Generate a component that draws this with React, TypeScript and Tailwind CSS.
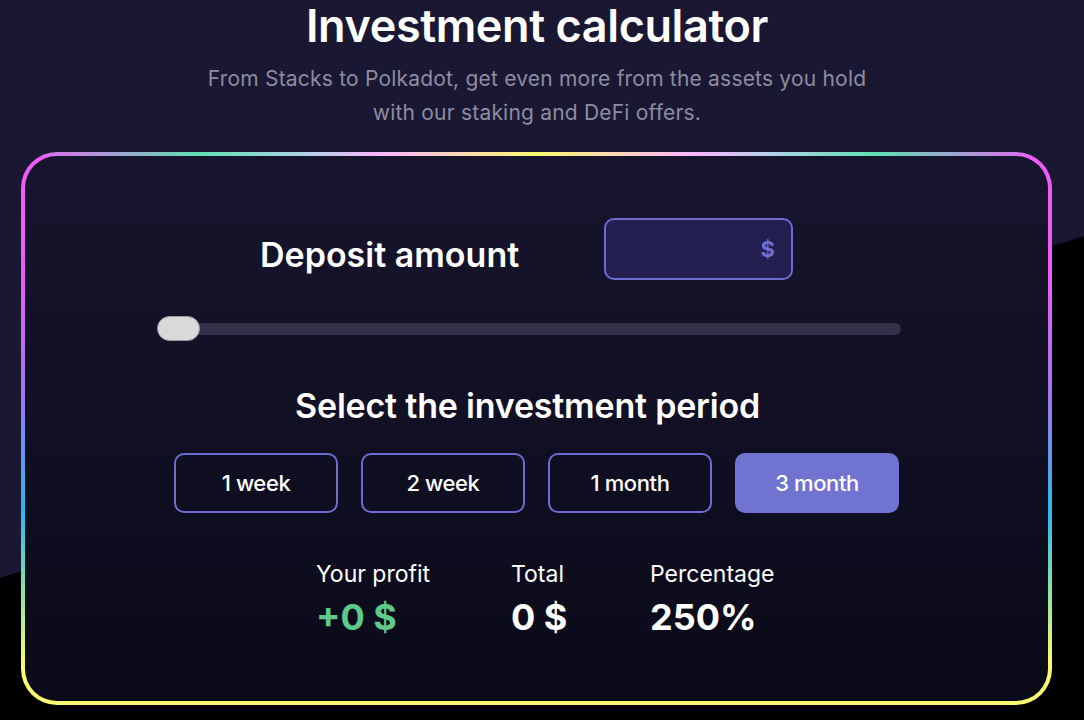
import { useState } from "react";

const periods = ["1 week", "2 week", "1 month", "3 month"];

export default function App() {
  const [period, setPeriod] = useState("3 month");

  return (
    <div className="relative min-h-[720px] w-[1084px] overflow-hidden bg-[#1a1733] font-['Inter',sans-serif] text-white">
      {/* black diagonal behind the card */}
      <svg
        className="absolute inset-0"
        width="1084"
        height="720"
        viewBox="0 0 1084 720"
        aria-hidden
      >
        <polygon points="0,578 1084,236 1084,720 0,720" fill="#000" />
      </svg>

      <div className="relative flex flex-col items-center pr-[10px]">
        <h1 className="pt-[2px] text-[45px] font-semibold leading-[48px] tracking-[-0.4px]">
          Investment calculator
        </h1>
        <p className="mt-[12px] text-center text-[21px] leading-[34px] tracking-[0.2px] text-[#8e8ca0]">
          From Stacks to Polkadot, get even more from the assets you hold
          <br />
          with our staking and DeFi offers.
        </p>
      </div>

      <div className="relative ml-[21px] mt-[22px] w-[1031px] rounded-[36px] p-[4px] [background:linear-gradient(to_right,#f05cf7_0%,#5ee0b0_17%,#a8d4e4_27%,#ffb4ff_35%,#fafa70_50%,#ffb4ff_65%,#a8d4e4_74%,#5ee0b0_83%,#f05cf7_100%)_top/100%_4px_no-repeat,linear-gradient(to_bottom,#f05cf7_0%,#ee5cf6_22%,#9a7af0_45%,#2bb8f0_65%,#86e2a8_79%,#fafa6e_92%,#fafa6e_100%)]">
        <div className="h-[545px] rounded-[32px] bg-gradient-to-b from-[#17152e] to-[#0b0a19]">
          {/* deposit */}
          <div className="flex items-center pl-[235px] pt-[62px]">
            <div className="mt-[12px] w-[344px] text-[34px] font-semibold leading-[40px]">
              Deposit amount
            </div>
            <div className="flex h-[62px] w-[189px] items-center justify-end rounded-[10px] border-2 border-[#6c6cd2] bg-[#221e4f] pr-[16px]">
              <span className="text-[22px] font-bold text-[#6f6fd6]">$</span>
            </div>
          </div>

          {/* slider */}
          <div className="relative ml-[132px] mt-[36px] flex h-[25px] w-[744px] items-center">
            <div className="h-[12px] w-full rounded-full bg-[#33304a]" />
            <div className="absolute left-0 top-0 h-[25px] w-[43px] rounded-full border border-[#9a9a9a] bg-[#d9d9d9]" />
          </div>

          <h2 className="mt-[45px] pr-[18px] text-center text-[34px] font-semibold leading-[40px] tracking-[-0.2px]">
            Select the investment period
          </h2>

          <div className="ml-[149px] mt-[27px] flex gap-[23px]">
            {periods.map((p) => (
              <button
                key={p}
                onClick={() => setPeriod(p)}
                className={
                  p === period
                    ? "h-[60px] w-[164px] rounded-[10px] border-2 border-[#7073d0] bg-[#7073d0] text-[22px] font-medium tracking-[-0.4px]"
                    : "h-[60px] w-[164px] rounded-[10px] border-2 border-[#6c6cd2] text-[22px] font-medium tracking-[-0.4px]"
                }
              >
                {p}
              </button>
            ))}
          </div>

          <div className="ml-[291px] mt-[47px] flex">
            <div className="w-[195px]">
              <div className="text-[23px] leading-[28px]">Your profit</div>
              <div className="mt-[7px] text-[36px] font-bold leading-[44px] text-[#5fc98a]">+0 $</div>
            </div>
            <div className="w-[139px]">
              <div className="text-[23px] leading-[28px]">Total</div>
              <div className="mt-[7px] text-[36px] font-bold leading-[44px]">0 $</div>
            </div>
            <div>
              <div className="text-[23px] leading-[28px]">Percentage</div>
              <div className="mt-[7px] text-[36px] font-bold leading-[44px]">250%</div>
            </div>
          </div>
        </div>
      </div>
    </div>
  );
}
